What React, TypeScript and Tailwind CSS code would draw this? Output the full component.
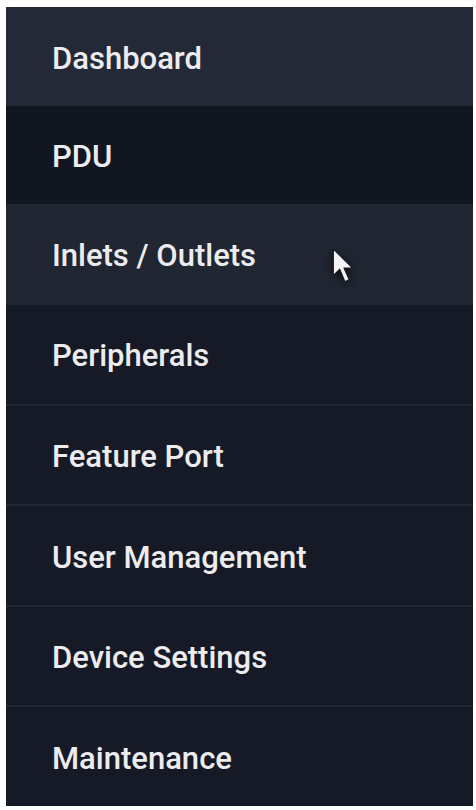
const items = [
  { label: "Dashboard", active: true },
  { label: "PDU", dark: true },
  { label: "Inlets / Outlets", hover: true },
  { label: "Peripherals" },
  { label: "Feature Port" },
  { label: "User Management" },
  { label: "Device Settings" },
  { label: "Maintenance" },
];

function Cursor() {
  return (
    <svg
      className="absolute left-[326px] top-[44px] drop-shadow-[0_2px_4px_rgba(0,0,0,0.7)]"
      width="28"
      height="42"
      viewBox="0 0 26 40"
    >
      <path
        d="M1 1 L1 26 L7 20 L12 32 L16 30 L11 19 L19 19 Z"
        fill="#f4f4f6"
        stroke="#1a1d27"
        strokeWidth="1"
        strokeLinejoin="round"
      />
    </svg>
  );
}

export default function App() {
  return (
    <div className="w-[476px] h-[810px] bg-white pt-[7px] pl-[6px] pr-[3px] pb-[4px]">
      <nav className="flex h-full flex-col bg-[#161a26] font-['Roboto',sans-serif]">
        {items.map((item, i) => (
          <div
            key={item.label}
            className={
              "relative flex flex-1 items-center pl-[46px] pt-[5px] text-[31px] font-medium text-[#ececee] " +
              (item.active
                ? "bg-[#242938]"
                : item.dark
                  ? "bg-[#121621]"
                  : item.hover
                    ? "bg-[#212633]"
                    : "") +
              (i > 2 ? " border-t-2 border-[#222735]" : "")
            }
          >
            {item.label}
            {item.hover && <Cursor />}
          </div>
        ))}
      </nav>
    </div>
  );
}
